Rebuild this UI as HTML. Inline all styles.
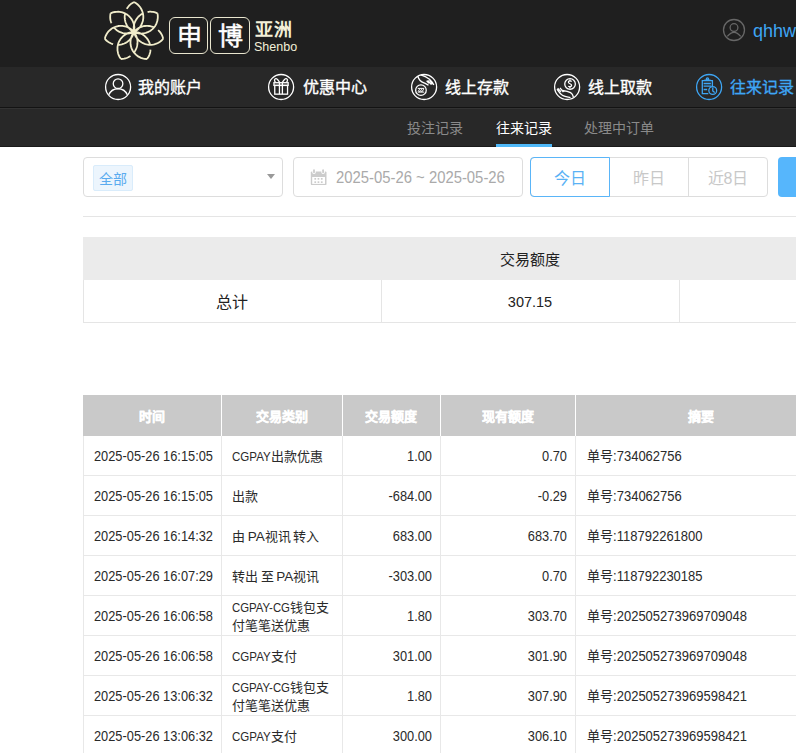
<!DOCTYPE html>
<html lang="zh-CN"><head><meta charset="utf-8">
<style>
*{box-sizing:border-box;margin:0;padding:0}
html,body{width:796px;height:753px;overflow:hidden;background:#fff;font-family:"Liberation Sans",sans-serif;position:relative}
.abs{position:absolute}
#top{position:absolute;left:0;top:0;width:796px;height:67px;background:#1f1f1f}
#nav{position:absolute;left:0;top:67px;width:796px;height:40px;background:#282828}
#navline{position:absolute;left:0;top:107px;width:796px;height:1px;background:#131313}
#sub{position:absolute;left:0;top:108px;width:796px;height:39px;background:#282828;border-top:1px solid #333;border-bottom:1px solid #1a1a1a}
.ni{position:absolute;top:67px;height:40px;color:#fff;font-size:16px;font-weight:bold;line-height:40px;white-space:nowrap}
.ni svg{position:absolute;top:4px;left:0}
.ni span{position:absolute;top:1px;font-weight:400;-webkit-text-stroke:0.35px currentColor}
.st{position:absolute;top:109px;height:39px;line-height:39px;font-size:14px;color:#8a8a8a;white-space:nowrap}
.box{position:absolute;border:1px solid #ddd;border-radius:4px;background:#fff}
i{font-style:normal}
.c{position:absolute;white-space:nowrap}
.sh{position:absolute;left:83px;top:237px;width:713px;height:43px;background:#ebebeb}
.sr{position:absolute;left:83px;top:280px;width:713px;height:43px;border-left:1px solid #e5e5e5;border-bottom:1px solid #e5e5e5}
.vl{position:absolute;width:1px;background:#e8e8e8}
.hl{position:absolute;left:83px;width:713px;height:1px;background:#e8e8e8}
.mh{position:absolute;left:83px;top:395px;width:713px;height:41px;background:#c9c9c9}
.th{position:absolute;top:395px;height:41px;line-height:43px;color:#fff;font-size:13px;font-weight:bold;-webkit-text-stroke:0.3px #fff;text-align:center}
.td{position:absolute;height:40px;line-height:41px;font-size:14px;color:#2a2a2a;white-space:nowrap;transform:scaleX(0.915);transform-origin:0 0}
.td.r{text-align:right;transform-origin:100% 0}
.td.two{line-height:18px;padding-top:3px}
.td b{font-weight:normal;font-size:13.5px;display:inline-block;transform-origin:0 0}
.td.k{transform:none;font-size:13px;word-spacing:-1px}
.td.k i{font-size:13px}
.td i{font-size:14px}
</style></head><body>
<div id="top"></div>
<div id="nav"></div>
<div id="navline"></div>
<div id="sub"></div>

<!-- logo -->
<svg class="abs" style="left:101px;top:0" width="66" height="64" viewBox="0 0 66 64"><path fill="none" stroke="#f0ecca" stroke-width="1.8" d="M33.0 32.0 35.1 30.8 36.7 29.5 38.0 28.2 39.0 27.0 39.8 25.8 40.5 24.5 41.1 23.2 41.5 22.0 41.9 20.8 42.1 19.5 42.3 18.2 42.3 17.0 42.3 15.8 42.1 14.5 41.9 13.2 41.5 12.0 41.1 10.8 40.5 9.5 39.8 8.2 39.0 7.0 38.0 5.8 36.7 4.5 35.1 3.2 33.0 2.0M33.0 32.0 30.8 30.7 29.1 29.3 27.8 28.0 26.8 26.7 25.9 25.4 25.2 24.0 24.7 22.7 24.3 21.4 24.0 20.0 23.8 18.7 23.7 17.4 23.7 16.1 23.9 14.7 24.1 13.4M25.8 8.9 26.3 8.0 26.9 7.2 27.6 6.3 28.3 5.4 29.2 4.6 30.2 3.7 31.5 2.9 33.0 2.0M33.0 32.0 35.3 32.9 37.3 33.3 39.0 33.5 40.6 33.6 42.1 33.4 43.6 33.2 44.9 32.9 46.1 32.4 47.3 31.9 48.5 31.3 49.5 30.7 50.5 29.9 51.5 29.1 52.4 28.2 53.2 27.2 54.0 26.2 54.7 25.1 55.3 23.9 55.8 22.5 56.3 21.1 56.6 19.5 56.8 17.7 56.8 15.7 56.5 13.3M33.0 32.0 32.7 29.4 32.7 27.3 32.9 25.5 33.3 23.8 33.8 22.3 34.4 21.0 35.1 19.7 35.9 18.6 36.7 17.5 37.6 16.5 38.6 15.6 39.7 14.8 40.8 14.1 42.0 13.4M46.6 12.0 47.6 11.8 48.6 11.7 49.7 11.7 50.8 11.8 52.1 11.9 53.4 12.2 54.8 12.6 56.5 13.3M33.0 32.0 33.7 34.3 34.6 36.2 35.6 37.7 36.5 38.9 37.6 40.1 38.6 41.0 39.7 41.8 40.8 42.5 42.0 43.2 43.2 43.7 44.3 44.1 45.6 44.4 46.8 44.6 48.0 44.8 49.3 44.8 50.6 44.8 51.9 44.6 53.3 44.3 54.6 43.9 56.0 43.4 57.5 42.7 59.0 41.7 60.6 40.5 62.2 38.7M33.0 32.0 34.8 30.1 36.5 28.8 38.0 27.8 39.6 27.1 41.0 26.6 42.5 26.2 43.9 26.0 45.3 25.9 46.7 25.9 48.0 26.0 49.3 26.2 50.6 26.5 51.9 26.9 53.1 27.5M57.1 30.1 57.9 30.8 58.6 31.6 59.3 32.4 59.9 33.3 60.6 34.4 61.2 35.6 61.7 37.0 62.2 38.7M33.0 32.0 31.6 34.0 30.8 35.9 30.2 37.5 29.8 39.1 29.6 40.6 29.5 42.0 29.5 43.4 29.6 44.7 29.9 46.0 30.2 47.2 30.6 48.4 31.1 49.5 31.7 50.7 32.4 51.7 33.1 52.7 34.0 53.7 34.9 54.7 36.0 55.5 37.1 56.4 38.5 57.1 39.9 57.8 41.6 58.4 43.6 58.8 46.0 59.0M33.0 32.0 35.6 32.2 37.6 32.7 39.4 33.3 40.9 34.1 42.2 34.9 43.4 35.8 44.5 36.8 45.5 37.8 46.3 38.9 47.1 40.0 47.7 41.1 48.3 42.3 48.7 43.6 49.1 44.9M49.5 49.7 49.4 50.7 49.3 51.7 49.1 52.8 48.7 53.9 48.3 55.1 47.8 56.3 47.0 57.6 46.0 59.0M33.0 32.0 30.6 32.2 28.6 32.6 26.9 33.2 25.4 33.9 24.1 34.7 23.0 35.5 21.9 36.4 21.0 37.3 20.1 38.3 19.4 39.3 18.7 40.4 18.1 41.5 17.6 42.6 17.2 43.8 16.9 45.0 16.6 46.3 16.5 47.6 16.5 49.0 16.5 50.4 16.8 51.9 17.1 53.5 17.7 55.2 18.6 57.0 20.0 59.0M33.0 32.0 34.4 34.2 35.3 36.1 35.9 37.8 36.3 39.5 36.5 41.1 36.5 42.5 36.4 44.0 36.2 45.4 35.9 46.7 35.5 48.0 35.0 49.2 34.4 50.4 33.7 51.5 33.0 52.6M29.5 55.9 28.6 56.5 27.7 57.0 26.8 57.5 25.7 58.0 24.5 58.3 23.2 58.7 21.7 58.9 20.0 59.0M33.0 32.0 31.3 30.2 29.7 29.0 28.2 28.0 26.8 27.3 25.4 26.7 24.0 26.3 22.7 26.1 21.4 25.9 20.1 25.9 18.8 25.9 17.5 26.0 16.3 26.3 15.1 26.6 13.9 27.0 12.7 27.5 11.6 28.1 10.5 28.8 9.4 29.7 8.3 30.6 7.3 31.7 6.3 33.0 5.4 34.5 4.5 36.3 3.8 38.7M33.0 32.0 32.2 34.5 31.3 36.4 30.3 37.9 29.2 39.2 28.1 40.4 27.0 41.3 25.8 42.2 24.6 42.9 23.4 43.5 22.1 43.9 20.8 44.3 19.5 44.6 18.2 44.8 16.8 44.8M12.1 44.2 11.1 43.9 10.2 43.5 9.2 43.0 8.2 42.5 7.1 41.8 6.0 41.0 4.9 40.0 3.8 38.7M33.0 32.0 33.3 29.6 33.4 27.6 33.2 25.8 32.8 24.2 32.4 22.8 31.8 21.4 31.2 20.2 30.5 19.1 29.7 18.0 28.9 17.1 28.0 16.2 27.1 15.4 26.1 14.6 25.0 14.0 23.9 13.4 22.7 12.9 21.4 12.4 20.1 12.1 18.7 11.9 17.2 11.7 15.6 11.8 13.8 12.0 11.8 12.4 9.5 13.3M33.0 32.0 30.6 32.9 28.5 33.4 26.7 33.6 25.0 33.5 23.4 33.4 21.9 33.1 20.6 32.7 19.3 32.2 18.0 31.6 16.9 30.9 15.8 30.2 14.8 29.3 13.8 28.4 12.9 27.4M10.4 23.2 10.1 22.3 9.8 21.3 9.5 20.2 9.3 19.1 9.2 17.9 9.2 16.5 9.3 15.0 9.5 13.3"/></svg>
<div class="abs" style="left:169px;top:17px;width:39px;height:37px;border:1px solid #e9e6cf;border-radius:6px"></div>
<div class="abs" style="left:210px;top:17px;width:40px;height:37px;border:1px solid #e9e6cf;border-radius:6px"></div>
<div class="abs" style="left:169px;top:16px;width:40px;height:40px;color:#fff;font-size:25px;text-align:center;line-height:40px;font-weight:400;-webkit-text-stroke:0.5px #fff">申</div>
<div class="abs" style="left:210px;top:16px;width:40px;height:40px;color:#fff;font-size:25px;text-align:center;line-height:40px;font-weight:400;-webkit-text-stroke:0.5px #fff">博</div>
<div class="abs" style="left:255px;top:19px;color:#f3f0d8;font-size:18px;font-weight:bold;line-height:22px;letter-spacing:1px">亚洲</div>
<div class="abs" style="left:254px;top:39px;color:#f3f0d8;font-size:12.5px;line-height:16px">Shenbo</div>

<!-- user -->
<svg class="abs" style="left:722px;top:18px" width="25" height="25" viewBox="0 0 25 25"><g fill="none" stroke="#676767" stroke-width="1.3"><circle cx="12" cy="12" r="10.5"/><circle cx="12" cy="9.6" r="3.9"/><path d="M5.3 18.4 Q12 10.2 18.7 18.4"/></g></svg>
<div class="abs" style="left:753px;top:19px;color:#3ea6f5;font-size:18px;line-height:24px">qhhw</div>

<!-- nav items -->
<div class="ni" style="left:102px;color:#fff"><svg width="32" height="32" viewBox="0 0 32 32"><g fill="none" stroke="#fff" stroke-width="1.3"><circle cx="16.1" cy="16" r="12.5"/><circle cx="16.05" cy="12.7" r="4.8"/><path d="M6.8 23.8 A10.1 10.1 0 0 1 25.3 23.8"/></g></svg><span style="left:36.4px">我的账户</span></div>
<div class="ni" style="left:265px;color:#fff"><svg width="32" height="32" viewBox="0 0 32 32"><g fill="none" stroke="#fff" stroke-width="1.3"><circle cx="16.1" cy="16" r="12.5"/><rect x="8.95" y="11.7" width="14.2" height="2.7"/><rect x="9.75" y="14.4" width="12.8" height="8.75"/><path d="M14.45 11.9V23.15M17.4 11.9V23.15M14.6 11.4C13.5 9.5 12.2 7.3 10.8 7.6 9.3 7.9 9 9.6 10.4 11.2M17.4 11.4C18.5 9.5 19.8 7.3 21.2 7.6 22.7 7.9 23 9.6 21.6 11.2"/></g></svg><span style="left:38.1px">优惠中心</span></div>
<div class="ni" style="left:408px;color:#fff"><svg width="32" height="32" viewBox="0 0 32 32"><g fill="none" stroke="#fff" stroke-width="1.3"><circle cx="16.1" cy="16" r="12.5"/><circle cx="12.95" cy="19.15" r="5.3"/><path stroke-width="1" d="M9.8 17.4H16.2M9.8 21.1H16.2M10.2 20.6L11.6 18.1M12.2 20.6L13.6 18.1M14.2 20.6L15.6 18.1M11.2 20.6H12.2M13.2 20.6H14.2"/><path d="M9.8 5.2C10.8 8.6 13 10.8 16 11.8 17.5 12.4 19 13.4 20.5 14.2M12.9 3.8C15.5 4.6 19 6 21.5 8.2 23.5 10 25 12 25.8 14M18.6 9.8L21 12.2M19.8 9.3L23.4 13.6M21.5 8.9L24.5 13.2"/></g></svg><span style="left:37.4px">线上存款</span></div>
<div class="ni" style="left:551px;color:#fff"><svg width="32" height="32" viewBox="0 0 32 32"><g fill="none" stroke="#fff" stroke-width="1.3"><circle cx="16.1" cy="16" r="12.5"/><circle cx="19.05" cy="12.95" r="5.3"/><path d="M20.6 10.6C20 9.7 17.4 9.6 17.4 11.3 17.4 12.9 20.6 12.6 20.6 14.3 20.6 16 18 16 17.3 15M18.95 8.6V9.6M18.95 16.1V17.1"/><path d="M6 18.2C7.5 20.5 9.5 23.5 12 24.6 14.5 25.7 17.3 26 19.5 26.6M11.3 19.3C14 19.7 17 20.2 19.6 21.6 21.2 22.6 22 24.2 22.4 26M6.6 17.2L10 20.7M9 16.8L12.4 21.2"/></g></svg><span style="left:36.6px">线上取款</span></div>
<div class="ni" style="left:693px;color:#3ea6f5"><svg width="32" height="32" viewBox="0 0 32 32"><g fill="none" stroke="#3ea6f5" stroke-width="1.3"><circle cx="16.1" cy="16" r="12.5"/><path d="M19.4 15.2V9.7H9.3V22.6H15.3M12 9.7V9.1H16.9V9.7M10.6 12.5H17.9M10.6 15.1H18.3M10.6 18.5H14.2"/><circle cx="14.45" cy="7.9" r="1.1"/><circle cx="19.76" cy="19.55" r="3.9"/><path d="M19.76 16.6V19.9L21.7 21.5"/></g></svg><span style="left:37.2px">往来记录</span></div>

<!-- sub nav -->
<div class="st" style="left:407px">投注记录</div>
<div class="st" style="left:496px;color:#fff">往来记录</div>
<div class="abs" style="left:496px;top:144px;width:56px;height:3px;background:#4fb8f8"></div>
<div class="st" style="left:584px">处理中订单</div>

<!-- filters -->
<div class="box" style="left:83px;top:157px;width:200px;height:40px"></div>
<div class="abs" style="left:93px;top:165px;width:40px;height:26px;background:#ecf5fd;border:1px solid #d9ecfb;border-radius:2px;color:#5aabef;font-size:14px;line-height:26px;text-align:center">全部</div>
<div class="abs" style="left:267px;top:174px;width:0;height:0;border-left:4px solid transparent;border-right:4px solid transparent;border-top:5px solid #999"></div>

<div class="box" style="left:293px;top:157px;width:230px;height:40px"></div>
<svg class="abs" style="left:310px;top:168px" width="17" height="18" viewBox="0 0 17 18"><rect x="0.8" y="3.4" width="15.7" height="13.7" rx="1.2" fill="#ccc"/><rect x="2.2" y="9" width="12.8" height="6.9" fill="#fff"/><rect x="2.3" y="0.6" width="3.4" height="5.4" rx="1.4" fill="#fff"/><rect x="11.4" y="0.6" width="3.4" height="5.4" rx="1.4" fill="#fff"/><rect x="3.1" y="1.3" width="1.8" height="3.9" rx="0.9" fill="#ccc"/><rect x="12.2" y="1.3" width="1.8" height="3.9" rx="0.9" fill="#ccc"/><g fill="#ccc"><rect x="4.4" y="10" width="1.7" height="1.7"/><rect x="7.6" y="10" width="1.7" height="1.7"/><rect x="10.9" y="10" width="1.7" height="1.7"/><rect x="4.4" y="13.3" width="1.7" height="1.7"/><rect x="7.6" y="13.3" width="1.7" height="1.7"/><rect x="10.9" y="13.3" width="1.7" height="1.7"/></g></svg>
<div class="abs" style="left:336px;top:167px;color:#aaa;font-size:16.5px;line-height:20px;transform:scaleX(0.9);transform-origin:0 0;white-space:nowrap">2025-05-26 ~ 2025-05-26</div>

<div class="box" style="left:530px;top:157px;width:238px;height:40px"></div>
<div class="abs" style="left:530px;top:157px;width:80px;height:40px;border:1px solid #5ab5f8;border-radius:4px 0 0 4px;color:#5ab2f5;font-size:16px;line-height:40px;padding-top:1px;text-align:center">今日</div>
<div class="abs" style="left:609px;top:157px;width:80px;height:40px;border-right:1px solid #ddd;color:#c8c8c8;font-size:16px;line-height:43px;text-align:center">昨日</div>
<div class="abs" style="left:688px;top:157px;width:80px;height:40px;color:#c8c8c8;font-size:16px;line-height:43px;text-align:center">近8日</div>
<div class="abs" style="left:778px;top:157px;width:60px;height:40px;background:#56b6fc;border-radius:4px"></div>

<div class="abs" style="left:83px;top:216px;width:713px;height:1px;background:#e5e5e5"></div>

<div class="sh"></div>
<div class="c" style="left:83px;top:237px;width:894px;height:43px;line-height:45px;text-align:center;font-size:15px;color:#222">交易额度</div>
<div class="sr"></div>
<div class="vl" style="left:381px;top:280px;height:43px;background:#e5e5e5"></div>
<div class="vl" style="left:679px;top:280px;height:43px;background:#e5e5e5"></div>
<div class="c" style="left:83px;top:280px;width:298px;height:42px;line-height:45px;text-align:center;font-size:16px;color:#222">总计</div>
<div class="c" style="left:381px;top:280px;width:298px;height:42px;line-height:45px;text-align:center;font-size:14.5px;color:#222">307.15</div>

<div class="mh"></div>
<div class="th" style="left:83px;width:138px">时间</div>
<div class="th" style="left:221px;width:121px">交易类别</div>
<div class="th" style="left:342px;width:98px">交易额度</div>
<div class="th" style="left:440px;width:135px">现有额度</div>
<div class="th" style="left:575px;width:251px">摘要</div>
<div class="vl" style="left:221px;top:395px;height:41px;background:#fff"></div>
<div class="vl" style="left:342px;top:395px;height:41px;background:#fff"></div>
<div class="vl" style="left:440px;top:395px;height:41px;background:#fff"></div>
<div class="vl" style="left:575px;top:395px;height:41px;background:#fff"></div>
<div class="vl" style="left:83px;top:436px;height:317px"></div>
<div class="vl" style="left:221px;top:436px;height:317px"></div>
<div class="vl" style="left:342px;top:436px;height:317px"></div>
<div class="vl" style="left:440px;top:436px;height:317px"></div>
<div class="vl" style="left:575px;top:436px;height:317px"></div>
<div class="hl" style="top:475px"></div>
<div class="hl" style="top:515px"></div>
<div class="hl" style="top:555px"></div>
<div class="hl" style="top:595px"></div>
<div class="hl" style="top:635px"></div>
<div class="hl" style="top:675px"></div>
<div class="hl" style="top:715px"></div>
<div class="td" style="left:94px;top:436px">2025-05-26 16:15:05</div>
<div class="td k" style="left:232px;top:436px"><b style="transform:scaleX(0.855);margin-right:-6.6px">CGPAY</b>出款优惠</div>
<div class="td r" style="left:342px;width:90px;top:436px">1.00</div>
<div class="td r" style="left:440px;width:127px;top:436px">0.70</div>
<div class="td" style="transform:scaleX(0.93);left:587px;top:436px">单号:734062756</div>
<div class="td" style="left:94px;top:476px">2025-05-26 16:15:05</div>
<div class="td k" style="left:232px;top:476px">出款</div>
<div class="td r" style="left:342px;width:90px;top:476px">-684.00</div>
<div class="td r" style="left:440px;width:127px;top:476px">-0.29</div>
<div class="td" style="transform:scaleX(0.93);left:587px;top:476px">单号:734062756</div>
<div class="td" style="left:94px;top:516px">2025-05-26 16:14:32</div>
<div class="td k" style="left:232px;top:516px">由 <b>PA</b>视讯 转入</div>
<div class="td r" style="left:342px;width:90px;top:516px">683.00</div>
<div class="td r" style="left:440px;width:127px;top:516px">683.70</div>
<div class="td" style="transform:scaleX(0.93);left:587px;top:516px">单号:118792261800</div>
<div class="td" style="left:94px;top:556px">2025-05-26 16:07:29</div>
<div class="td k" style="left:232px;top:556px">转出 至 <b>PA</b>视讯</div>
<div class="td r" style="left:342px;width:90px;top:556px">-303.00</div>
<div class="td r" style="left:440px;width:127px;top:556px">0.70</div>
<div class="td" style="transform:scaleX(0.93);left:587px;top:556px">单号:118792230185</div>
<div class="td" style="left:94px;top:596px">2025-05-26 16:06:58</div>
<div class="td two k" style="left:232px;top:596px"><b style="transform:scaleX(0.843);margin-right:-10.8px">CGPAY-CG</b>钱包支<br>付笔笔送优惠</div>
<div class="td r" style="left:342px;width:90px;top:596px">1.80</div>
<div class="td r" style="left:440px;width:127px;top:596px">303.70</div>
<div class="td" style="transform:scaleX(0.93);left:587px;top:596px">单号:202505273969709048</div>
<div class="td" style="left:94px;top:636px">2025-05-26 16:06:58</div>
<div class="td k" style="left:232px;top:636px"><b style="transform:scaleX(0.855);margin-right:-6.6px">CGPAY</b>支付</div>
<div class="td r" style="left:342px;width:90px;top:636px">301.00</div>
<div class="td r" style="left:440px;width:127px;top:636px">301.90</div>
<div class="td" style="transform:scaleX(0.93);left:587px;top:636px">单号:202505273969709048</div>
<div class="td" style="left:94px;top:676px">2025-05-26 13:06:32</div>
<div class="td two k" style="left:232px;top:676px"><b style="transform:scaleX(0.843);margin-right:-10.8px">CGPAY-CG</b>钱包支<br>付笔笔送优惠</div>
<div class="td r" style="left:342px;width:90px;top:676px">1.80</div>
<div class="td r" style="left:440px;width:127px;top:676px">307.90</div>
<div class="td" style="transform:scaleX(0.93);left:587px;top:676px">单号:202505273969598421</div>
<div class="td" style="left:94px;top:716px">2025-05-26 13:06:32</div>
<div class="td k" style="left:232px;top:716px"><b style="transform:scaleX(0.855);margin-right:-6.6px">CGPAY</b>支付</div>
<div class="td r" style="left:342px;width:90px;top:716px">300.00</div>
<div class="td r" style="left:440px;width:127px;top:716px">306.10</div>
<div class="td" style="transform:scaleX(0.93);left:587px;top:716px">单号:202505273969598421</div>
</body></html>
